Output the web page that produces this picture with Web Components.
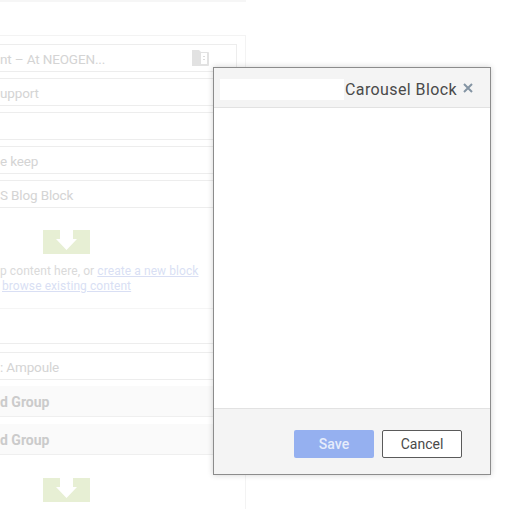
<!DOCTYPE html>
<html>
<head>
<meta charset="utf-8">
<style>
  html, body { margin: 0; height: 509px; overflow: hidden; background: #fff; }
</style>
</head>
<body>
<x-page>
  <x-row>nt – At NEOGEN...<svg slot="icon" width="17" height="16" viewBox="0 0 17 16"><path d="M0 0h7l2 2h7a1 1 0 0 1 1 1v12a1 1 0 0 1-1 1H0z" fill="#e2e2e2"/><rect x="9" y="3" width="6" height="11" fill="#fff"/><rect x="11" y="6" width="2" height="1" fill="#dcdcdc"/><rect x="11" y="9" width="2" height="1" fill="#dcdcdc"/></svg></x-row>
  <x-row>upport</x-row>
  <x-row></x-row>
  <x-row>e keep</x-row>
  <x-row>S Blog Block</x-row>
  <x-drop>
    <span>p content here, or <a>create a new block</a></span>
    <span class="second"><a>browse existing content</a></span>
  </x-drop>
  <x-row plain></x-row>
  <x-row>: Ampoule</x-row>
  <x-group>d Group</x-group>
  <x-group>d Group</x-group>
  <x-drop bare></x-drop>
</x-page>
<x-modal title-text="Carousel Block"></x-modal>

<script>
// background form, all washed out behind the modal
class XPage extends HTMLElement {
  constructor() {
    super();
    let shadow = this.attachShadow({mode: 'open'});
    shadow.innerHTML = `
    <style>
      :host { display: block; width: 246px; height: 509px; overflow: hidden; box-sizing: border-box; }
      .topline { height: 2px; background: #f6f6f6; }
      .panel {
        margin-top: 33px;
        height: 480px;
        box-sizing: border-box;
        border-top: 1px solid #f3f3f3;
        border-right: 1px solid #f3f3f3;
        padding: 8px 8px 0 0;
        display: flex;
        flex-direction: column;
      }
    </style>
    <div class="topline"></div>
    <div class="panel"><slot></slot></div>
    `;
  }
}
customElements.define('x-page', XPage);

class XRow extends HTMLElement {
  constructor() {
    super();
    let shadow = this.attachShadow({mode: 'open'});
    shadow.innerHTML = `
    <style>
      :host {
        display: flex;
        flex: none;
        align-items: center;
        justify-content: space-between;
        box-sizing: border-box;
        height: 28px;
        margin-bottom: 6px;
        border: 1px solid #ededed;
        border-left: 0;
        font: 13.5px "Roboto", sans-serif;
        letter-spacing: -.15px;
        color: #d4d4d4;
      }
      :host([plain]) { height: 35px; margin-bottom: 8px; border: 0; border-bottom: 1px solid #ededed; }
      .text { padding-top: 1px; }
      .icon { display: flex; padding-right: 27px; }
    </style>
    <span class="text"><slot></slot></span>
    <span class="icon"><slot name="icon"></slot></span>
    `;
  }
}
customElements.define('x-row', XRow);

class XGroup extends HTMLElement {
  constructor() {
    super();
    let shadow = this.attachShadow({mode: 'open'});
    shadow.innerHTML = `
    <style>
      :host {
        display: flex;
        flex: none;
        align-items: center;
        box-sizing: border-box;
        height: 31px;
        margin-bottom: 7px;
        padding-top: 1px;
        background: #fafafa;
        border-bottom: 1px solid #efefef;
        font: bold 14px "Roboto", sans-serif;
        color: #cbcbcb;
      }
    </style>
    <slot></slot>
    `;
  }
}
customElements.define('x-group', XGroup);

class XDrop extends HTMLElement {
  constructor() {
    super();
    let shadow = this.attachShadow({mode: 'open'});
    shadow.innerHTML = `
    <style>
      :host {
        display: flex;
        flex: none;
        flex-direction: column;
        box-sizing: border-box;
        height: 95px;
        padding-top: 16px;
        border-bottom: 1px solid #f5f5f5;
        font: 12px/15px "Roboto", sans-serif;
        letter-spacing: .08px;
        color: #dadada;
      }
      :host([bare]) { border: 0; }
      .target {
        width: 47px;
        height: 24px;
        margin: 0 0 10px 43px;
        background: #e7efd4;
        display: flex;
        justify-content: center;
      }
      svg { margin-top: 0; }
    </style>
    <div class="target">
      <svg width="21" height="20" viewBox="0 0 21 20"><path d="M4 0h13v9h4L10.5 20 0 9h4z" fill="#fff"/></svg>
    </div>
    <slot></slot>
    `;
  }
  connectedCallback() {
    this.querySelectorAll('a').forEach((a) => {
      a.style.color = '#d9dff4';
      a.style.textDecoration = 'underline';
    });
    this.querySelectorAll('.second').forEach((s) => { s.style.paddingLeft = '2px'; });
  }
}
customElements.define('x-drop', XDrop);

class XButton extends HTMLElement {
  constructor() {
    super();
    let shadow = this.attachShadow({mode: 'open'});
    shadow.innerHTML = `
    <style>
      :host {
        display: flex;
        align-items: center;
        justify-content: center;
        box-sizing: border-box;
        width: 80px;
        height: 28px;
        border-radius: 2px;
        font: 14px "Roboto", sans-serif;
        border: 1px solid #5a5a5a;
        background: #fff;
        color: #4a4a4a;
      }
      :host([primary]) { border: 0; background: #95b0f0; color: #e6ecfb; font-weight: 500; }
    </style>
    <slot></slot>
    `;
  }
}
customElements.define('x-button', XButton);

class XModal extends HTMLElement {
  constructor() {
    super();
    let shadow = this.attachShadow({mode: 'open'});
    shadow.innerHTML = `
    <style>
      :host {
        position: absolute;
        left: 213px;
        top: 67px;
        width: 278px;
        height: 408px;
        box-sizing: border-box;
        display: flex;
        flex-direction: column;
        background: #fff;
        border: 1px solid #8c8c8c;
        box-shadow: 0 0 6px rgba(0,0,0,.18);
        font-family: "Roboto", sans-serif;
      }
      header {
        height: 40px;
        box-sizing: border-box;
        display: flex;
        align-items: center;
        padding: 4px 0 0 6px;
        background: #f4f4f4;
        border-bottom: 1px solid #e2e2e2;
      }
      .blank { width: 124px; height: 21px; background: #fff; margin-right: 1px; }
      .title { font-size: 16px; letter-spacing: .4px; color: #4a4a4a; margin-top: -1px; }
      .close { display: flex; margin-left: 6px; margin-top: -4px; }
      main { flex: 1; }
      footer {
        height: 66px;
        box-sizing: border-box;
        display: flex;
        justify-content: flex-end;
        gap: 8px;
        padding: 21px 28px 0 0;
        background: #f4f4f4;
        border-top: 1px solid #e2e2e2;
      }
    </style>
    <header>
      <span class="blank"></span>
      <span class="title"></span>
      <span class="close"><svg width="10" height="10" viewBox="0 0 10 10"><path d="M1 1l8 8M9 1l-8 8" stroke="#8494a3" stroke-width="2"/></svg></span>
    </header>
    <main></main>
    <footer>
      <x-button primary>Save</x-button>
      <x-button>Cancel</x-button>
    </footer>
    `;
    shadow.querySelector('.title').textContent = this.getAttribute('title-text') || '';
  }
}
customElements.define('x-modal', XModal);
</script>
</body>
</html>
